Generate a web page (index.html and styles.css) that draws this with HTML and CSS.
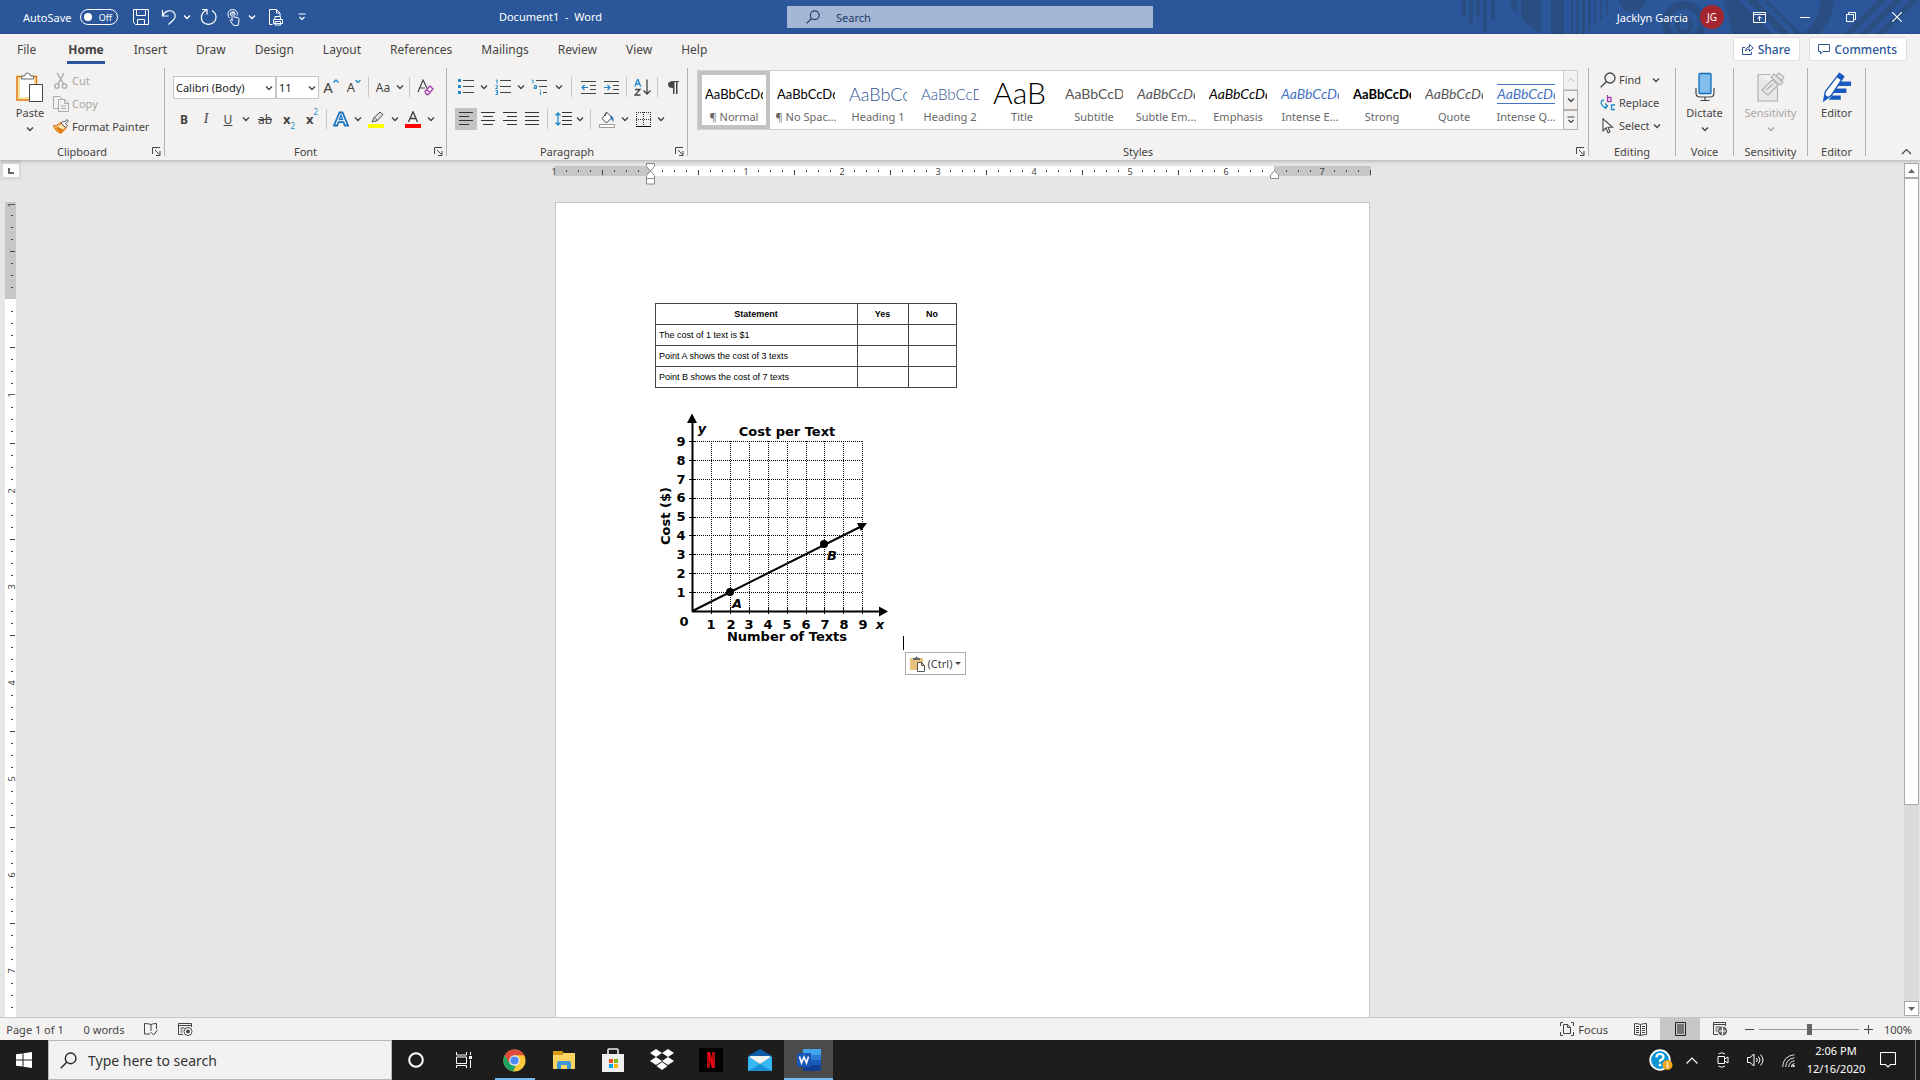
FILE: index.html
```html
<!DOCTYPE html>
<html lang="en">
<head>
<meta charset="utf-8">
<title>Document1 - Word</title>
<link rel="stylesheet" href="styles.css">
</head>
<body>
<svg class="defs" aria-hidden="true">
  <symbol id="chev" viewBox="0 0 8 8"><path d="M1 2.5 4 5.5 7 2.5" fill="none" stroke="currentColor" stroke-width="1.4"/></symbol>
  <symbol id="launch" viewBox="0 0 9 9"><path d="M.5 7V.5H8M3 3l4.500 4.500M8 4v4.500H4" fill="none" stroke="currentColor"/></symbol>
  <symbol id="glass" viewBox="0 0 16 16"><circle cx="10" cy="6" r="5" fill="none" stroke="currentColor" stroke-width="1.300"/><path d="M6.300 9.700.7 15.300" stroke="currentColor" stroke-width="1.300"/></symbol>
</svg>
<div class="app">
<header class="titlebar">
  <svg class="art" width="480" height="34" viewBox="0 0 480 34" aria-hidden="true">
    <g fill="#2a4d82">
      <path d="M22 0h4v16h-4zM29 0h4v23h-4zM36 0h4v17h-4zM43 0h4v32h-4zM51 0h4v20h-4z"/>
      <path d="M70 0h7v14q-6-5-7-14zM81 0h8v26q-6-4-8-10zM89 0h12v33q-8-3-12-10zM111 0h13v34h-13zM131 0h2v34h-2zM136 0h3v34h-3zM142 0h3v34h-3zM148 0h3v31h-3zM154 0h2v26h-2zM160 0h2v20h-2zM166 0h2v14h-2z"/>
      <path d="M179 0h27q-3 12-14 12T179 0z"/>
      <path d="M283 0h16l34 34h-40zM306 0h10l34 34h-10zM322 0h6l34 34h-6zM380 0h14q-1 22-16 34h-16q18-12 18-34zM404 34 438 0h8l-34 34zM420 34 454 0h8l-34 34zM436 34 470 0h8l-34 34z"/>
    </g>
    <g fill="none" stroke="#2a4d82"><circle cx="244" cy="23" r="18" stroke-width="8"/><circle cx="244" cy="25" r="7" stroke-width="5"/></g>
  </svg>
  <div class="quick">
    <label class="autosave" for="autosave">AutoSave</label>
    <button class="toggle" id="autosave" role="switch" aria-checked="false"><i></i>Off</button>
    <button class="qa qa-save" aria-label="Save"><svg width="16" height="16" viewBox="0 0 16 16"><path d="M.5.5h15v15H2.500l-2-2zM3.500.5v6h9v-6M4.500 15.500v-5h7v5" fill="none" stroke="#fff"/></svg></button>
    <button class="qa qa-undo" aria-label="Undo"><svg width="16" height="16" viewBox="0 0 16 16"><path d="M1.500 1v6h6M1.700 6.800C4 1.500 9 .8 12 2.800c3 2.200 2.800 5.700.5 8L7.500 15.500" fill="none" stroke="#fff" stroke-width="1.200"/></svg></button>
    <button class="qa-caret" aria-label="Undo list"><svg width="8" height="8"><use href="#chev"/></svg></button>
    <button class="qa qa-redo" aria-label="Redo"><svg width="17" height="16" viewBox="0 0 17 16"><path d="M2 .5h5v5M6.500 1C0 4 0 12 5 14.500c6 2.500 11-1.500 11-6.500 0-3-1.500-5-4-6.500" fill="none" stroke="#fff" stroke-width="1.200"/></svg></button>
    <button class="qa" aria-label="Touch mode"><svg width="14" height="17" viewBox="0 0 14 17"><path d="M2.300 9C-.5 5 1.500.6 5.500.6S11.500 4 10 6.500M5 10V4.200q1-1.400 2 0V8l4 .7q1.500.5 1 2.300l-.8 5.400H6.500L3 11.500q1-1.600 2.500 0zM3.500 6.500Q2.500 3 5.500 2.600q3 0 2.700 3" fill="none" stroke="#fff"/></svg></button>
    <button class="qa-caret wide" aria-label="Mode list"><svg width="8" height="8"><use href="#chev"/></svg></button>
    <button class="qa qa-print" aria-label="Print preview"><svg width="15" height="17" viewBox="0 0 15 17"><path d="M3.500 15.500H.5V.5h7l3.500 3.500v3M7.500.5V4H11M6 11V7.500h5.500V11M4.500 14.500v-4h9v4zM6 12.500v3.500h5.500v-3.500z" fill="none" stroke="#fff"/></svg></button>
    <button class="qa" aria-label="Customize toolbar"><svg width="8" height="8" viewBox="0 0 8 8"><path d="M.5 1h7M1.500 4l2.500 2.500L6.500 4" fill="none" stroke="#fff" stroke-width="1.200"/></svg></button>
    <h1 class="doc-title">Document1&nbsp; -&nbsp; Word</h1>
  </div>
  <label class="find-box"><svg width="14" height="14"><use href="#glass"/></svg><input type="text" placeholder="Search" aria-label="Search"></label>
  <div class="account">
    <span class="user">Jacklyn Garcia</span>
    <button class="avatar">JG</button>
    <button class="win" aria-label="Ribbon display options"><svg width="13" height="11" viewBox="0 0 13 11"><path d="M.5.5h12v10H.5zM.5 2.500h12M6.500 9V4.500M4.500 6.500l2-2 2 2" fill="none" stroke="#fff"/></svg></button>
    <button class="win" aria-label="Minimize"><svg width="10" height="10" viewBox="0 0 10 10"><path d="M0 5.500h10" stroke="#fff"/></svg></button>
    <button class="win" aria-label="Restore"><svg width="10" height="10" viewBox="0 0 10 10"><path d="M.5 2.500h7v7h-7zM2.500 2.500v-2h7v7h-2" fill="none" stroke="#fff"/></svg></button>
    <button class="win" aria-label="Close"><svg width="10" height="10" viewBox="0 0 10 10"><path d="M0 0l10 10M10 0 0 10" stroke="#fff" stroke-width="1.100"/></svg></button>
  </div>
</header>

<section class="ribbon">
  <nav class="tabs">
    <button class="tab">File</button><button class="tab active">Home</button><button class="tab">Insert</button><button class="tab">Draw</button><button class="tab">Design</button><button class="tab">Layout</button><button class="tab">References</button><button class="tab">Mailings</button><button class="tab">Review</button><button class="tab">View</button><button class="tab">Help</button>
    <button class="share first"><svg width="12" height="12" viewBox="0 0 12 12"><path d="M3 4.500H.5v7h9V9M3.500 8c.3-3 2-4 4-4V1.500L11.300 5 7.500 8.300V6q-2.500 0-4 2z" fill="none" stroke="#2b579a"/></svg>Share</button>
    <button class="share"><svg width="12" height="12" viewBox="0 0 12 12"><path d="M.5 1.500h11v7H5L2.500 11V8.500h-2z" fill="none" stroke="#2b579a"/></svg>Comments</button>
  </nav>
  <div class="groups">
    <div class="group clipboard">
      <div class="group-body clip-body">
        <button class="big"><svg width="28" height="30" viewBox="0 0 28 30"><path d="M1 4.500h19.500V28H1z" fill="#fce4a8" stroke="#e07b13" stroke-width="1.500"/><path d="M4 7h14v18H4z" fill="#fff"/><path d="M5.500 7V4h3q.5-3 3-3t3 3h3v3z" fill="#fff" stroke="#666"/><path d="M13.500 12.500h13v17h-13z" fill="#fff" stroke="#444"/></svg><span>Paste</span><svg width="8" height="8"><use href="#chev"/></svg></button>
        <div class="stack">
          <button class="line off"><svg width="16" height="16" viewBox="0 0 16 16"><path d="M4 0 10.500 11M11 0 5 11" stroke="#aaa" stroke-width="1.400"/><g fill="none" stroke="#aaa" stroke-width="1.300"><circle cx="4" cy="13" r="2.200"/><circle cx="11.500" cy="13" r="2.200"/></g></svg>Cut</button>
          <button class="line off"><svg width="16" height="16" viewBox="0 0 16 16"><path d="M5 12.500H.5V.5H7L9 3M5.500 3.500H12l3.500 3.500v8.500h-10zM11.500 3.500v4h4M8 10h5M8 12.500h5" fill="none" stroke="#aaa"/></svg>Copy</button>
          <button class="line"><svg width="16" height="16" viewBox="0 0 16 16"><path d="M8 3.500 13 9l-5 5Q3 13 .8 7 5 7 8 3.500z" fill="#fce4a8" stroke="#e07b13" stroke-width="1.300"/><path d="M3 9.500 8 14l3-3-7-3.500z" fill="#e07b13"/><path d="M8 4 12.500 8.500l2-1.500-2-2.500L15.500 2 14 .7 11 3 9.500 2.500z" fill="#fff" stroke="#555"/></svg>Format Painter</button>
        </div>
      </div>
      <div class="group-foot"><span>Clipboard</span><button aria-label="Clipboard settings"><svg width="9" height="9"><use href="#launch"/></svg></button></div>
    </div>

    <div class="group font">
      <div class="group-body rows">
        <div class="row">
          <label class="combo face"><select aria-label="Font"><option>Calibri (Body)</option></select><svg width="8" height="8"><use href="#chev"/></svg></label>
          <label class="combo size"><select aria-label="Font size"><option>11</option></select><svg width="8" height="8"><use href="#chev"/></svg></label>
          <button class="tool wide grow" aria-label="Grow font">A<svg width="6" height="5" viewBox="0 0 6 5"><path d="M.5 3.500 3 1l2.500 2.500" fill="none" stroke="#1e8bcd" stroke-width="1.300"/></svg></button>
          <button class="tool shrink" aria-label="Shrink font">A<svg width="6" height="5" viewBox="0 0 6 5"><path d="M.5 1 3 3.500 5.500 1" fill="none" stroke="#1e8bcd" stroke-width="1.300"/></svg></button>
          <i class="sep"></i>
          <button class="tool case">Aa</button><button class="caret" aria-label="Case options"><svg width="8" height="8"><use href="#chev"/></svg></button>
          <i class="sep"></i>
          <button class="tool wide" aria-label="Clear formatting"><svg width="17" height="17" viewBox="0 0 17 17"><path d="M1 13 6 1l4.500 9M3 9h5" fill="none" stroke="#444" stroke-width="1.200"/><path d="M8 12.500 13 7l3 3-5 5.500H9.500zM9.500 10.500l3.500 3" fill="#fff" stroke="#a33bb0" stroke-width="1.300"/></svg></button>
        </div>
        <div class="row">
          <button class="tool"><b>B</b></button><button class="tool serif"><i>I</i></button><button class="tool"><u>U</u></button><button class="caret wide" aria-label="Underline options"><svg width="8" height="8"><use href="#chev"/></svg></button>
          <button class="tool wide"><s>ab</s></button><button class="tool wide script"><b>x</b><sub>2</sub></button><button class="tool script"><b>x</b><sup>2</sup></button>
          <i class="sep"></i>
          <button class="tool" aria-label="Text effects"><svg width="16" height="16" viewBox="0 0 16 16"><path d="M1 14.500 6.500 1.500h3L15 14.500h-3.200l-1.300-3.300h-5l-1.300 3.300z" fill="#fff" stroke="#1c72bd" stroke-width="1.800"/><path d="M6.300 8.500 8 4l1.700 4.500z" fill="#fff" stroke="#1c72bd" stroke-width="1.300"/></svg></button><button class="caret" aria-label="Effects list"><svg width="8" height="8"><use href="#chev"/></svg></button>
          <button class="tool wide" aria-label="Highlight"><svg width="16" height="17" viewBox="0 0 16 17"><path d="M4 11 6 6.500 12 1l3 2.500L9.500 9.500 4 11zM6.500 6.500l3 3" fill="#ddd" stroke="#555"/><path d="M0 13h16v4H0z" fill="#ff0"/></svg></button><button class="caret wide" aria-label="Highlight list"><svg width="8" height="8"><use href="#chev"/></svg></button>
          <button class="tool" aria-label="Font color"><svg width="16" height="17" viewBox="0 0 16 17"><path d="M3.500 11 8 .8 12.500 11M5 7.500h6" fill="none" stroke="#444" stroke-width="1.400"/><path d="M0 13h16v4H0z" fill="red"/></svg></button><button class="caret wide" aria-label="Color list"><svg width="8" height="8"><use href="#chev"/></svg></button>
        </div>
      </div>
      <div class="group-foot"><span>Font</span><button aria-label="Font settings"><svg width="9" height="9"><use href="#launch"/></svg></button></div>
    </div>

    <div class="group para">
      <div class="group-body rows">
        <div class="row">
          <button class="tool" aria-label="Bullets"><svg width="16" height="16" viewBox="0 0 16 16"><path d="M0 0h3v3H0zM0 6h3v3H0zM0 12h3v3H0z" fill="#1e8bcd"/><path d="M5 1.500h11M5 7.500h11M5 13.500h11" stroke="#444"/></svg></button><button class="caret wide" aria-label="Bullet list"><svg width="8" height="8"><use href="#chev"/></svg></button>
          <button class="tool wide" aria-label="Numbering"><svg width="16" height="16" viewBox="0 0 16 16"><path d="M1 1h1v3.500M.5 6.500h2v1.500l-2 1.500h2M.5 11.500h2v4h-2M1 13.500h1.500" fill="none" stroke="#1e8bcd"/><path d="M5 1.500h11M5 7.500h11M5 13.500h11" stroke="#444"/></svg></button><button class="caret" aria-label="Numbering list"><svg width="8" height="8"><use href="#chev"/></svg></button>
          <button class="tool wide" aria-label="Multilevel list"><svg width="16" height="16" viewBox="0 0 16 16"><path d="M1 1h1v3.500M3 6.500h2.500v3H3V8h2.500M9 11h1M9.500 12.500V16" fill="none" stroke="#1e8bcd"/><path d="M5 1.500h11M8 7.500h8M12 13.500h4" stroke="#444"/></svg></button><button class="caret wider" aria-label="Multilevel options"><svg width="8" height="8"><use href="#chev"/></svg></button>
          <i class="sep"></i>
          <button class="tool wide" aria-label="Decrease indent"><svg width="15" height="13" viewBox="0 0 15 13"><path d="M0 .5h15M9 4.500h6M9 8.500h6M0 12.500h15" stroke="#444"/><path d="M7 6.500H1M3.500 4 1 6.500 3.500 9" fill="none" stroke="#1e8bcd" stroke-width="1.200"/></svg></button>
          <button class="tool" aria-label="Increase indent"><svg width="15" height="13" viewBox="0 0 15 13"><path d="M0 .5h15M9 4.500h6M9 8.500h6M0 12.500h15" stroke="#444"/><path d="M0 6.500h6M3.500 4 6 6.500 3.500 9" fill="none" stroke="#1e8bcd" stroke-width="1.200"/></svg></button>
          <i class="sep"></i>
          <button class="tool" aria-label="Sort"><svg width="17" height="17" viewBox="0 0 17 17"><path d="M.8 7.500 3.500.5h.5l2.700 7M2 5h4" fill="none" stroke="#1e8bcd" stroke-width="1.300"/><path d="M1 10.500h5l-5 5.500h5.500M13 .5V15M9.500 11.500 13 15l3.500-3.500" fill="none" stroke="#444" stroke-width="1.300"/></svg></button>
          <i class="sep"></i>
          <button class="tool pilcrow" aria-label="Show marks"><svg width="11" height="13" viewBox="0 0 11 13"><path d="M5.500 0H11v1H9.500v12H8V1H6.500v12H5V7Q0 7 0 3.500T5.500 0z" fill="#444"/></svg></button>
        </div>
        <div class="row">
          <button class="tool pressed" aria-label="Align left"><svg width="14" height="14" viewBox="0 0 14 14"><path d="M0 .5h14M0 4.500h10M0 8.500h14M0 12.500h10" stroke="#333"/></svg></button>
          <button class="tool" aria-label="Center"><svg width="14" height="14" viewBox="0 0 14 14"><path d="M0 .5h14M2 4.500h10M0 8.500h14M2 12.500h10" stroke="#333"/></svg></button>
          <button class="tool" aria-label="Align right"><svg width="14" height="14" viewBox="0 0 14 14"><path d="M0 .5h14M4 4.500h10M0 8.500h14M4 12.500h10" stroke="#333"/></svg></button>
          <button class="tool" aria-label="Justify"><svg width="14" height="14" viewBox="0 0 14 14"><path d="M0 .5h14M0 4.500h14M0 8.500h14M0 12.500h14" stroke="#333"/></svg></button>
          <i class="sep"></i>
          <button class="tool" aria-label="Line spacing"><svg width="17" height="14" viewBox="0 0 17 14"><path d="M7 .5h10M7 4.500h10M7 8.500h10M7 12.500h10" stroke="#333"/><path d="M3 1v12M.5 3.500 3 1l2.500 2.500M.5 10.500 3 13l2.500-2.500" fill="none" stroke="#1e8bcd" stroke-width="1.300"/></svg></button><button class="caret" aria-label="Spacing list"><svg width="8" height="8"><use href="#chev"/></svg></button>
          <i class="sep"></i>
          <button class="tool wide" aria-label="Shading"><svg width="16" height="17" viewBox="0 0 16 17"><path d="M8 1.500 3 7.500 7.500 12 13 6.500z" fill="#fff" stroke="#444"/><path d="M8 1q-2 0-1.500 4" fill="none" stroke="#444"/><path d="M11 4.500q4 0 3.500 6.500-3-3-3.500-6.500z" fill="#1c72bd"/><path d="M.5 13.500h15v3H.5z" fill="#fff" stroke="#999"/></svg></button><button class="caret" aria-label="Shading list"><svg width="8" height="8"><use href="#chev"/></svg></button>
          <button class="tool wide" aria-label="Borders"><svg width="15" height="15" viewBox="0 0 15 15"><path d="M0 .5h15M0 7.500h15M.5 0v15M7.500 0v15M14.500 0v15" stroke="#333" stroke-dasharray="1 1"/><path d="M0 14.500h15" stroke="#111"/></svg></button><button class="caret" aria-label="Border list"><svg width="8" height="8"><use href="#chev"/></svg></button>
        </div>
      </div>
      <div class="group-foot"><span>Paragraph</span><button aria-label="Paragraph settings"><svg width="9" height="9"><use href="#launch"/></svg></button></div>
    </div>

    <div class="group styles">
      <div class="group-body">
        <div class="gallery">
          <div class="tiles">
            <button class="tile chosen"><span class="sample">AaBbCcDd</span><span>¶ Normal</span></button>
            <button class="tile"><span class="sample">AaBbCcDd</span><span>¶ No Spac...</span></button>
            <button class="tile"><span class="sample h1">AaBbCc</span><span>Heading 1</span></button>
            <button class="tile"><span class="sample h2">AaBbCcD</span><span>Heading 2</span></button>
            <button class="tile"><span class="sample title">AaB</span><span>Title</span></button>
            <button class="tile"><span class="sample gray sub">AaBbCcD</span><span>Subtitle</span></button>
            <button class="tile"><span class="sample it gray">AaBbCcDd</span><span>Subtle Em...</span></button>
            <button class="tile"><span class="sample it">AaBbCcDd</span><span>Emphasis</span></button>
            <button class="tile"><span class="sample it blue">AaBbCcDd</span><span>Intense E...</span></button>
            <button class="tile"><span class="sample strong">AaBbCcDd</span><span>Strong</span></button>
            <button class="tile"><span class="sample it gray">AaBbCcDd</span><span>Quote</span></button>
            <button class="tile"><span class="sample it blue ruled">AaBbCcDd</span><span>Intense Q...</span></button>
          </div>
          <div class="scroll">
            <button class="off" aria-label="Previous styles"><svg width="8" height="8" viewBox="0 0 8 8"><path d="M1 5.500 4 2.500l3 3" fill="none" stroke="currentColor"/></svg></button>
            <button aria-label="Next styles"><svg width="8" height="8"><use href="#chev"/></svg></button>
            <button aria-label="More styles"><svg width="8" height="8" viewBox="0 0 8 8"><path d="M.5 1h7M1.500 4 4 6.500 6.500 4" fill="none" stroke="currentColor" stroke-width="1.200"/></svg></button>
          </div>
        </div>
      </div>
      <div class="group-foot"><span>Styles</span><button aria-label="Styles pane"><svg width="9" height="9"><use href="#launch"/></svg></button></div>
    </div>

    <div class="group editing">
      <div class="group-body stack">
        <button class="line"><svg width="16" height="16"><use href="#glass"/></svg>Find<svg class="gap" width="8" height="8"><use href="#chev"/></svg></button>
        <button class="line"><svg width="16" height="16" viewBox="0 0 16 16"><path d="M7.500 0v6.500h3.500v-4H7.500" fill="none" stroke="#a33bb0" stroke-width="1.300"/><path d="M15 10h-3.500v4.500H15M4 5Q-.5 6 2 10t5 1M5 8.500 7.500 11 5 14" fill="none" stroke="#1e8bcd" stroke-width="1.300"/></svg>Replace</button>
        <button class="line"><svg width="16" height="16" viewBox="0 0 16 16"><path d="M3 .8v12l3-3 2 5 2-1-2-4.500h4.500z" fill="#fff" stroke="#444" stroke-width="1.100"/></svg>Select<svg width="8" height="8"><use href="#chev"/></svg></button>
      </div>
      <div class="group-foot"><span>Editing</span></div>
    </div>
    <div class="group voice">
      <div class="group-body"><button class="big"><svg width="20" height="30" viewBox="0 0 20 30"><path d="M1 16v5q0 4 4 4h10q4 0 4-4v-5M10 25v3.500M5.500 28.500h9" fill="none" stroke="#444" stroke-width="1.200"/><rect x="4" y="1.500" width="12" height="20" rx="1" fill="#83bdec" stroke="#0f6cbd" stroke-width="1.300"/></svg><span>Dictate</span><svg width="8" height="8"><use href="#chev"/></svg></button></div>
      <div class="group-foot"><span>Voice</span></div>
    </div>
    <div class="group sens">
      <div class="group-body"><button class="big off"><svg width="28" height="30" viewBox="0 0 28 30"><g fill="#e9e8e7" stroke="#b4b2b0" stroke-width="1.200"><path d="M1 2.500h12M20.500 15v14H1v-27"/><path d="M5 18 15 8l6 5-10 10zM9 18l7-6" /><path d="M14 5l3-3 9 8-3 3zM19 4l3-3 5 4-3 4z"/></g></svg><span>Sensitivity</span><svg width="8" height="8"><use href="#chev"/></svg></button></div>
      <div class="group-foot"><span>Sensitivity</span></div>
    </div>
    <div class="group editor">
      <div class="group-body"><button class="big"><svg width="32" height="32" viewBox="0 0 32 32"><path d="M17 10h14v5H14zM14 17.500h12v5H11zM11 25h9v4.500H7z" fill="#185abd"/><path d="M18.500 1.500 23 5 10 25 2 30.500 3.500 21z" fill="#fff" stroke="#185abd" stroke-width="1.500"/><path d="M15.500 5.500 18.500 1 24 4.500 21 9zM1.500 31 3 24l4 3z" fill="#185abd"/></svg><span>Editor</span></button></div>
      <div class="group-foot"><span>Editor</span></div>
    </div>
    <button class="collapse" aria-label="Collapse ribbon"><svg width="11" height="7" viewBox="0 0 11 7"><path d="M1 6l4.500-4.500L10 6" fill="none" stroke="#444" stroke-width="1.200"/></svg></button>
  </div>
</section>

<main class="work">
  <div class="side">
    <button class="tabstop" aria-label="Tab stop"><svg width="6" height="6" viewBox="0 0 6 6"><path d="M1 0v5h5" fill="none" stroke="#666" stroke-width="2"/></svg></button>
    <svg class="vruler" aria-hidden="true">
      <defs><pattern id="vt" width="11" height="96" y="1" patternUnits="userSpaceOnUse"><path d="M6 12.500h2M6 24.500h2M6 36.500h2M5 48.500h5M6 60.500h2M6 72.500h2M6 84.500h2" stroke="#444"/></pattern></defs>
      <rect width="11" height="97" fill="#c6c6c6"/><rect y="97" width="11" height="100%" fill="#fff"/><rect width="11" height="100%" fill="url(#vt)"/>
      <g class="ruler-text"><text transform="translate(10 3) rotate(-90)">1</text><text transform="translate(10 193) rotate(-90)">1</text><text transform="translate(10 289) rotate(-90)">2</text><text transform="translate(10 385) rotate(-90)">3</text><text transform="translate(10 481) rotate(-90)">4</text><text transform="translate(10 577) rotate(-90)">5</text><text transform="translate(10 673) rotate(-90)">6</text><text transform="translate(10 769) rotate(-90)">7</text></g>
    </svg>
  </div>
  <div class="canvas">
    <svg class="hruler" width="817" height="26" viewBox="0 0 817 26" aria-hidden="true">
      <defs><pattern id="ht" width="96" height="11" y="6" patternUnits="userSpaceOnUse"><path d="M12.500 4v2M24.500 4v2M36.500 4v2M48.500 4v5M60.500 4v2M72.500 4v2M84.500 4v2" stroke="#444"/></pattern></defs>
      <path d="M0 6h817v10H0z" fill="#c6c6c6"/><path d="M96 6h624v10H96z" fill="#fff"/><path d="M0 6h817v10H0z" fill="url(#ht)"/>
      <g class="ruler-text"><text x="0" y="15">1</text><text x="192" y="15">1</text><text x="288" y="15">2</text><text x="384" y="15">3</text><text x="480" y="15">4</text><text x="576" y="15">5</text><text x="672" y="15">6</text><text x="768" y="15">7</text></g>
      <path d="M92.500 3.500h8v3l-4 4.500-4-4.500zM96.500 11l4 4.500v3h-8v-3zM92.500 18.500h8v5.500h-8z" fill="#fff" stroke="#888"/>
      <path d="M720.500 10.500l4 4.500v3.500h-8V15z" fill="#fff" stroke="#888"/>
    </svg>
    <article class="page">
      <table class="claims">
        <thead><tr><th class="c1">Statement</th><th class="c2">Yes</th><th>No</th></tr></thead>
        <tbody>
          <tr><td>The cost of 1 text is $1</td><td></td><td></td></tr>
          <tr><td>Point A shows the cost of 3 texts</td><td></td><td></td></tr>
          <tr><td>Point B shows the cost of 7 texts</td><td></td><td></td></tr>
        </tbody>
      </table>
      <div class="figure">
        <svg class="chart" width="240" height="242" viewBox="655 408 240 242" role="img" aria-label="Cost per Text">
          <path d="M693 441.500h170M693 460.500h170M693 479.500h170M693 498.500h170M693 517.500h170M693 535.500h170M693 554.500h170M693 573.500h170M693 592.500h170M711.500 441v170M730.500 441v170M749.500 441v170M768.500 441v170M787.500 441v170M806.500 441v170M824.500 441v170M843.500 441v170M862.500 441v170" stroke="#000" stroke-dasharray="1 1" fill="none"/>
          <path d="M689 441.500h6M689 460.500h6M689 479.500h6M689 498.500h6M689 517.500h6M689 535.500h6M689 554.500h6M689 573.500h6M689 592.500h6M711.500 608v6M730.500 608v6M749.500 608v6M768.500 608v6M787.500 608v6M806.500 608v6M824.500 608v6M843.500 608v6M862.500 608v6" stroke="#000"/>
          <path d="M692.500 612V420M692 611.500h190M692.500 611 862 526" stroke="#000" stroke-width="2"/>
          <path d="M692 413.500 697 423h-10zM888 611.500 879 606.500v10zM867 523 857 523l4 8z"/>
          <circle cx="730" cy="592" r="4"/><circle cx="824" cy="544" r="4"/>
          <g class="mid"><text x="787" y="436">Cost per Text</text><text x="787" y="641">Number of Texts</text><text transform="translate(669.500 516) rotate(-90)">Cost ($)</text>
          <text x="684" y="626">0</text><text x="711" y="629">1</text><text x="731" y="629">2</text><text x="749" y="629">3</text><text x="768" y="629">4</text><text x="787" y="629">5</text><text x="806" y="629">6</text><text x="825" y="629">7</text><text x="844" y="629">8</text><text x="863" y="629">9</text>
          <text x="681" y="597">1</text><text x="681" y="578">2</text><text x="681" y="559">3</text><text x="681" y="540">4</text><text x="681" y="521">5</text><text x="681" y="502">6</text><text x="681" y="484">7</text><text x="681" y="465">8</text><text x="681" y="446">9</text></g>
          <g class="mid ital"><text x="702" y="433">y</text><text x="880" y="629">x</text><text x="737" y="608">A</text><text x="832" y="560">B</text></g>
        </svg>
        <span class="cursor"><button class="paste-opt"><svg width="15" height="16" viewBox="0 0 15 16"><path d="M0 2h13v12H0z" fill="#e8c27a"/><path d="M3 4V2h2q1.500-3 3 0h2v2z" fill="#666"/><path d="M7.500 6.500h4l3 3v6h-7zM11.500 6.500v3h3" fill="#fff" stroke="#555"/></svg>(Ctrl)<i></i></button></span>
      </div>
    </article>
  </div>
  <div class="vscroll">
    <button aria-label="Scroll up"><svg width="7" height="4" viewBox="0 0 7 4"><path d="M0 4 3.500 0 7 4z" fill="#666"/></svg></button>
    <div class="thumb"></div><div class="track"></div>
    <button aria-label="Scroll down"><svg width="7" height="4" viewBox="0 0 7 4"><path d="M0 0 3.500 4 7 0z" fill="#666"/></svg></button>
  </div>
</main>

<footer class="status">
  <button class="pages">Page 1 of 1</button><button class="words">0 words</button>
  <button class="st" aria-label="Proofing"><svg width="14" height="13" viewBox="0 0 14 13"><path d="M7 1.500Q5 .5.500.5v10.500H6M7 1.500Q9 .5 12.500.5V6M7 1.500V8M6.500 9l3 3L13.500 7" fill="none" stroke="#444"/></svg></button>
  <button class="st" aria-label="Macro recording"><svg width="15" height="13" viewBox="0 0 15 13"><path d="M5 11.500H.5V.5h13V4M.5 2.500h13M2.500 5h4M2.500 7h2M2.500 9h2" fill="none" stroke="#444"/><circle cx="10" cy="8.500" r="4" fill="#fff" stroke="#444"/><circle cx="10" cy="8.500" r="2" fill="#444"/></svg></button>
  <span class="push"></span>
  <button class="focus"><svg width="14" height="14" viewBox="0 0 14 14"><path d="M.5 4V.5H3M.5 10v3.500H3M11 .5h2.500V4M13.500 10v3.500H11M3.500 2.500h4l3 3v6h-7zM7.500 2.500v3h3" fill="none" stroke="#444"/></svg>Focus</button>
  <button class="view" aria-label="Read mode"><svg width="13" height="13" viewBox="0 0 13 13"><path d="M6.500 1.500Q4 .5.500.5v11q3.500 0 6 1 2.500-1 6-1V.5Q9 .5 6.500 1.500zv11M2 3.500h3M2 5.500h3M2 7.500h3M2 9.500h3M8 3.500h3M8 5.500h3M8 7.500h3M8 9.500h3" fill="none" stroke="#444"/></svg></button>
  <button class="view on" aria-label="Print layout"><svg width="11" height="14" viewBox="0 0 11 14"><path d="M.5.5h10v13H.5zM2 3h7M2 5h7M2 7h7M2 9h7M2 11h7" fill="none" stroke="#222"/></svg></button>
  <button class="view" aria-label="Web layout"><svg width="14" height="14" viewBox="0 0 14 14"><path d="M5 12.500H.5V.5h12V4M.5 2.500h12M2.500 5h5M2.500 7h2M2.500 9h2" fill="none" stroke="#444"/><circle cx="9.500" cy="9" r="4" fill="#777" stroke="#444"/><path d="M6 9h7M9.500 5v8" stroke="#fff"/></svg></button>
  <button class="zoom-b" aria-label="Zoom out"><svg width="9" height="9" viewBox="0 0 9 9"><path d="M0 4.500h9" stroke="#444"/></svg></button>
  <input class="zoom" type="range" min="0" max="100" value="50" aria-label="Zoom">
  <button class="zoom-b" aria-label="Zoom in"><svg width="9" height="9" viewBox="0 0 9 9"><path d="M0 4.500h9M4.500 0v9" stroke="#444"/></svg></button>
  <button class="pct">100%</button>
</footer>

<nav class="taskbar">
  <button class="app-b" aria-label="Start"><svg width="16" height="16" viewBox="0 0 16 16"><path d="M0 2.300 6.500 1.400v6.100H0zM7.500 1.200 16 0v7.500H7.500zM0 8.500h6.500v6.100L0 13.700zM7.500 8.500H16V16l-8.500-1.200z" fill="#fff"/></svg></button>
  <label class="task-search"><svg width="17" height="17"><use href="#glass"/></svg><input type="text" placeholder="Type here to search" aria-label="Type here to search"></label>
  <button class="app-b" aria-label="Cortana"><svg width="16" height="16" viewBox="0 0 16 16"><circle cx="8" cy="8" r="6.800" fill="none" stroke="#fff" stroke-width="2"/></svg></button>
  <button class="app-b" aria-label="Task view"><svg width="16" height="16" viewBox="0 0 16 16"><path d="M.5 0v3h10V0M.5 5h10v6.500H.5zM.5 16v-2.500h10V16M14.500 0v3M14.500 8v8" fill="none" stroke="#fff"/><path d="M13 4h3v3h-3z" fill="#fff"/></svg></button>
  <button class="app-b pin run first" aria-label="Chrome"><svg width="23" height="23" viewBox="0 0 24 24"><circle cx="12" cy="12" r="11.500" fill="#fdc93c"/><path d="M12 12 6.500 15 1.800 6.500A11.500 11.500 0 0 1 22 6.500H12z" fill="#dd4b3e"/><path d="M1.800 6.500 7 15l5 2.500 2-1-3.500 7A11.500 11.500 0 0 1 1.800 6.500z" fill="#1da362"/><circle cx="12" cy="12" r="5.500" fill="#f1f1f1"/><circle cx="12" cy="12" r="4.300" fill="#4c8bf5"/></svg></button>
  <button class="app-b pin" aria-label="File Explorer"><svg width="22" height="18" viewBox="0 0 22 18"><path d="M0 0h9l2 2h-2v3H0z" fill="#d99b12"/><path d="M0 4h9l1-2h12v16H0z" fill="#fcd462"/><path d="M4 18v-6q0-2 2-2h10q2 0 2 2v6h-4v-4H8v4z" fill="#3e97d6"/></svg></button>
  <button class="app-b pin" aria-label="Store"><svg width="24" height="24" viewBox="0 0 24 24"><path d="M7 7V2q0-1 1-1h8q1 0 1 1v5" fill="none" stroke="#eee" stroke-width="1.600"/><path d="M1 6h22v18H1z" fill="#f0f0f0"/><path d="M8 11h4v4H8z" fill="#f25022"/><path d="M13 11h4v4h-4z" fill="#7fba00"/><path d="M8 16h4v4H8z" fill="#00a4ef"/><path d="M13 16h4v4h-4z" fill="#ffb900"/></svg></button>
  <button class="app-b pin" aria-label="Dropbox"><svg width="24" height="22" viewBox="0 0 24 22"><path d="M6 0l6 4-6 4-6-4zM18 0l6 4-6 4-6-4zM6 8l6 4-6 4-6-4zM18 8l6 4-6 4-6-4zM6.500 17l5.500-4 5.500 4-5.500 4z" fill="#fff"/></svg></button>
  <button class="app-b pin" aria-label="Netflix"><svg width="24" height="24" viewBox="0 0 24 24"><path d="M0 0h24v24H0z"/><path d="M8 4h3v16H8zM13 4h3v16h-3z" fill="#b1060f"/><path d="M8 4h3l5 16h-3z" fill="#e50914"/></svg></button>
  <button class="app-b pin" aria-label="Mail"><svg width="24" height="22" viewBox="0 0 24 22"><path d="M0 7 12 0l12 7v6H0z" fill="#0f5ca8"/><path d="M0 7v15h24V7L12 15z" fill="#35b8f1"/><path d="M2 7h20v1.500L12 15 2 8.500z" fill="#f2f2f2"/><path d="M0 22 12 15l12 7z" fill="#1a8fd8"/></svg></button>
  <button class="app-b pin current" aria-label="Word"><svg width="24" height="22" viewBox="0 0 24 22"><path d="M6 0h18v6H6z" fill="#41a5ee"/><path d="M6 6h18v5H6z" fill="#2b7cd3"/><path d="M6 11h18v5H6z" fill="#185abd"/><path d="M6 16h18v6H6z" fill="#103f91"/><path d="M0 4h14v14H0z" fill="#1a56b5"/><path d="M2.500 7.500 4.500 14 7 8l2.500 6 2-6.500" fill="none" stroke="#fff" stroke-width="1.600"/></svg></button>
  <span class="push"></span>
  <button class="tray" aria-label="Help"><svg width="24" height="22" viewBox="0 0 24 22"><circle cx="11" cy="11" r="9.800" fill="#0c93d4" stroke="#fff" stroke-width="1.800"/><path d="M7.500 8.500Q7.500 5 11 5t3.500 3Q14.500 10 11 11.500v1.500" fill="none" stroke="#fff" stroke-width="2.200"/><circle cx="11" cy="16" r="1.400" fill="#fff"/><circle cx="18.500" cy="16" r="5" fill="#f5a81c"/><path d="M18.500 13v1.500M18.500 15.500v3.500" stroke="#fff" stroke-width="1.500"/></svg></button>
  <button class="tray thin" aria-label="Hidden icons"><svg width="12" height="7" viewBox="0 0 12 7"><path d="M.5 6.500 6 1l5.500 5.500" fill="none" stroke="#fff" stroke-width="1.200"/></svg></button>
  <button class="tray" aria-label="Meet Now"><svg width="12" height="16" viewBox="0 0 12 16"><path d="M1 4.500h6.500v7H1zM7.500 7 11 5v6L7.500 9M1.500 2Q4.500-.5 8 2M1.500 14q3 2.500 6.500 0" fill="none" stroke="#fff"/></svg></button>
  <button class="tray" aria-label="Volume"><svg width="17" height="14" viewBox="0 0 17 14"><path d="M.5 4.500H3l4-3.500v12L3 9.500H.5zM9.500 5q1.500 2 0 4M11.500 3.500q3 3.500 0 7M13.500 1.500q5 5.500 0 11" fill="none" stroke="#fff"/></svg></button>
  <button class="tray" aria-label="Network"><svg width="13" height="13" viewBox="0 0 13 13"><path d="M.7 13Q1 2 12.500.7M3.700 13Q4 5 12.500 3.700M6.700 13q.3-5.500 5.800-6.300M9.200 13q0-3 3.300-3.500" fill="none" stroke="#ddd"/><circle cx="11.500" cy="12" r="1.200" fill="#fff"/></svg></button>
  <button class="clock"><span>2:06 PM</span><span>12/16/2020</span></button>
  <button class="tray note" aria-label="Notifications"><svg width="16" height="16" viewBox="0 0 16 16"><path d="M.5.500h15v12H10.500L8 15l-2.500-2.500h-5z" fill="none" stroke="#fff" stroke-width="1.100"/></svg></button>
  <button class="desk" aria-label="Show desktop"></button>
</nav>
</div>
</body>
</html>
```
FILE: styles.css
```css
*{box-sizing:border-box}
body{margin:0;font-family:"Noto Sans","Open Sans",sans-serif;font-size:11px;color:#444;background:#e6e6e6}
button{font:inherit;color:inherit;background:none;border:0;padding:0;margin:0;display:flex;align-items:center;justify-content:center}
input,select{font:inherit;color:inherit}
svg{flex:none;display:block}
.defs{position:absolute;width:0;height:0}
.app{height:100vh;display:grid;grid-template-rows:auto auto minmax(0,1fr) auto auto;overflow:hidden}
.push{flex:1}

.titlebar{position:relative;height:34px;background:#2b579a;color:#fff;display:grid;grid-template-columns:minmax(0,1fr) 366px minmax(0,1fr);align-items:center;padding-left:20px}
.art{position:absolute;right:0;top:0}
.quick{display:flex;align-items:center;height:34px;padding-left:3px}
.toggle{width:38px;height:16px;border:1px solid #fff;border-radius:8px;margin:0 8px 0 7px;padding:0 5px 0 3px;justify-content:space-between;font-size:9px}
.autosave{width:50px}
.toggle i{width:8px;height:8px;border-radius:50%;background:#fff}
.qa{width:20px;height:34px}
.qa-caret{width:10px;height:34px}
.qa-caret.wide{width:16px}
.qa-save{width:30px}
.qa-undo{width:26px}
.qa-redo,.qa-print{width:32px}
.doc-title{margin:0 185px 0 auto;font-size:11px;font-weight:400;line-height:32px;white-space:nowrap}
.find-box{height:22px;background:#a4b7d4;color:#1d3a6b;display:flex;align-items:center;padding-left:19px;gap:16px}
.find-box input{flex:1;min-width:0;border:0;background:none;padding:0;outline:0}
.find-box input::placeholder{color:#1d3a6b;opacity:1}
.account{position:relative;display:flex;justify-content:flex-end;align-items:center}
.user{margin-right:12px}
.avatar{width:24px;height:24px;border-radius:50%;background:#a4262c;margin-right:12px;font-size:10px}
.win{width:46px;height:32px}

.ribbon{background:#f3f2f1;position:relative;z-index:1;box-shadow:0 1px 4px rgba(0,0,0,.25)}
.tabs{display:flex;align-items:center;height:34px;padding:0 13px 4px 17px;font-size:12px;gap:29px}
.tab{height:30px;white-space:nowrap;border-bottom:3px solid transparent;padding-top:3px}
.tab.active{font-weight:700;border-bottom-color:#2b579a;padding:3px 1px 0;margin-left:2px}
.share{height:24px;margin-left:-20px;padding:0 9px 0 8px;gap:4px;background:#fff;border:1px solid #e1dfdd;border-radius:2px;color:#2b579a;font-weight:500;font-size:12px}
.share.first{margin-left:auto}
.groups{display:flex;height:92px;padding-bottom:4px}
.group{display:flex;flex-direction:column;justify-content:space-between;border-right:1px solid #b3b0ad;flex:none}
.group-body{height:72px}
.group-foot{position:relative;height:8px;line-height:8px;display:flex;justify-content:center;align-items:center}
.group-foot button{position:absolute;right:3px;bottom:0;width:9px;height:9px}
.clipboard{width:165px}.font{width:282px}.para{width:241px}.styles{flex:1;min-width:0}.editing{width:87px}.voice{width:58px}.sens{width:74px}.editor{width:58px}
.clip-body{display:flex;padding-left:10px}
.big{flex-direction:column;width:100%;justify-content:flex-start;padding-top:4px}
.big span{line-height:16px;margin:3px 0 4px}
.big svg:first-child{height:30px}
.clip-body .big{width:40px}
.off{color:#a8a6a4}
.stack{display:flex;flex-direction:column}
.line{height:23px;gap:3px;justify-content:flex-start;white-space:nowrap}
.clip-body .stack{padding:1px 0 0 3px}
.editing .stack{padding-left:11px}
.line .gap{margin-left:8px}

.rows{padding:7px 0 0 8px;display:flex;flex-direction:column;gap:8px}
.row{display:flex;height:24px;align-items:center}
.tool{width:22px;height:22px;font-size:12px}
.tool.wide{width:24px}
.caret{width:12px;height:22px}
.caret.wide{width:14px}
.caret.wider{width:16px}
.sep{width:1px;height:20px;background:#c8c6c4;margin:0 4px}
.font .sep{margin:0 3px}
.pressed{background:#c5c3c1}
.serif{font-family:"Liberation Serif",serif;font-size:14px}
.grow{font-size:15px}.shrink{font-size:13px}
.grow svg,.shrink svg{align-self:flex-start;margin-top:3px}
.script b{font-size:13px}
.script sub,.script sup{font-size:8px;color:#1e8bcd;line-height:8px}
.script sub{align-self:flex-end}.script sup{align-self:flex-start}
.combo{position:relative;display:block}
.combo select{appearance:none;width:100%;height:23px;border:1px solid #c8c6c4;background:#fff;padding:0 2px;border-radius:0;color:#222;display:block}
.combo svg{position:absolute;right:3px;top:8px}
.face{width:103px}.size{width:43px}

.styles .group-body{padding:2px 10px 0 9px}
.gallery{display:flex;height:60px}
.tiles{flex:1;min-width:0;overflow:hidden;display:flex;background:#fff;border:1px solid #d2d0ce;border-right:0}
.tile{flex:none;width:72px;height:58px;border:4px solid transparent;flex-direction:column;justify-content:flex-end;line-height:16px;white-space:nowrap;color:#666}
.tile.chosen{border-color:#c5c3c1}
.sample{width:58px;height:28px;overflow:hidden;font-family:Lato,sans-serif;font-size:13px;line-height:26px;color:#000;text-align:left}
.h1{font-size:18px;font-weight:300;color:#2f5496}
.h2{font-size:15px;font-weight:300;color:#2f5496}
.title{font-size:30px;font-weight:300;line-height:22px}
.sub,.it{font-size:14px}
.gray{color:#555}.it{font-style:italic}.blue{color:#4472c4}.strong{font-weight:700}
.ruled{height:20px;line-height:18px;border-top:1px solid #4472c4;border-bottom:1px solid #4472c4;margin-bottom:5px}
.scroll{width:15px;display:grid;grid-template-rows:repeat(3,1fr)}
.scroll button{border:1px solid #b3b0ad}
.scroll .off{border-color:#d2d0ce;color:#bbb}
.collapse{align-self:flex-end;width:54px;height:10px;padding-left:26px}

.work{display:grid;grid-template-columns:21px minmax(0,1fr) 16px;background:#e6e6e6;min-height:0;border-bottom:1px solid #c6c6c6}
.side{display:flex;flex-direction:column;min-height:0;overflow:hidden}
.tabstop{width:22px;height:20px;background:#fcfcfc;border:3px solid #dadada;border-top-width:4px}
.vruler{width:11px;flex:1;margin:22px 0 0 5px;min-height:0}
.ruler-text{font-size:9px;fill:#444;text-anchor:middle}
.canvas{display:flex;flex-direction:column;align-items:center;min-height:0;overflow:hidden}
.hruler{overflow:visible;margin-bottom:16px}
.page{width:815px;flex:1 0 1056px;background:#fff;border:1px solid #c6c6c6;padding:100px 99px}
.claims{border-collapse:collapse;width:302px;font:9px "Liberation Sans",Arial,sans-serif;color:#000}
.claims th,.claims td{border:1px solid #444;height:21px;padding:0 4px 0 3px;text-align:left}
.claims th{text-align:center}
.c1{width:202px}.c2{width:51px}
.figure{display:flex;align-items:flex-end;margin-top:20px}
.chart{margin-right:8px}
.mid{font:bold 13px "DejaVu Sans",Verdana,sans-serif;text-anchor:middle}
.ital{font-style:italic}
.cursor{position:relative;width:1px;height:14px;background:#000}
.paste-opt{position:absolute;left:2px;top:16px;width:61px;height:23px;border:1px solid #ababab;background:#fff;gap:3px;font-size:11px}
.paste-opt i{border:3px solid transparent;border-top-color:#444;border-bottom:0}
.vscroll{display:flex;flex-direction:column;padding:3px 1px 1px 0}
.vscroll button{height:15px;background:#fff;border:1px solid #ababab}
.thumb{flex:627;background:#fff;border:1px solid #ababab}
.track{flex:196;background:#dadada}

.status{height:22px;background:#f3f2f1;display:flex;align-items:center;padding:0 9px 0 7px;white-space:nowrap}
.status button{height:22px}
.pages{width:56px}.words{margin:0 8px 0 20px;width:42px}
.st{width:35px}
.focus{gap:4px;margin-right:12px}
.view{width:40px}
.on{background:#c8c6c4}
.zoom-b{width:19px}
.zoom{appearance:none;width:100px;height:12px;margin:0;background:linear-gradient(#999,#999) center/100% 1px no-repeat}
.zoom::-webkit-slider-thumb{appearance:none;width:5px;height:11px;background:#666}
.status .pct{width:26px;margin-left:7px}

.taskbar{height:40px;background:#1d1d1d;color:#fff;display:flex}
.app-b{width:48px;height:40px}
.pin{width:49px}
.first.run{margin-left:2px}
.run{background:linear-gradient(#76b9ed,#76b9ed) center bottom/40px 2px no-repeat}
.current{background:#4b4b4b;border-bottom:2px solid #76b9ed;padding-top:2px}
.task-search{width:344px;background:#f2f2f2;border:1px solid #b8b8b8;color:#222;display:flex;align-items:center;gap:11px;padding-left:11px;font-size:14px}
.task-search input{border:0;background:none;padding:0;flex:1;min-width:0;outline:0}
.task-search input::placeholder{color:#333;opacity:1}
.tray{width:33px}
.tray.thin{width:29px}
.clock{flex-direction:column;width:62px;line-height:18px;font-size:11px}
.note{width:48px;padding-right:6px}
.desk{width:5px;border-left:1px solid #777}
```
